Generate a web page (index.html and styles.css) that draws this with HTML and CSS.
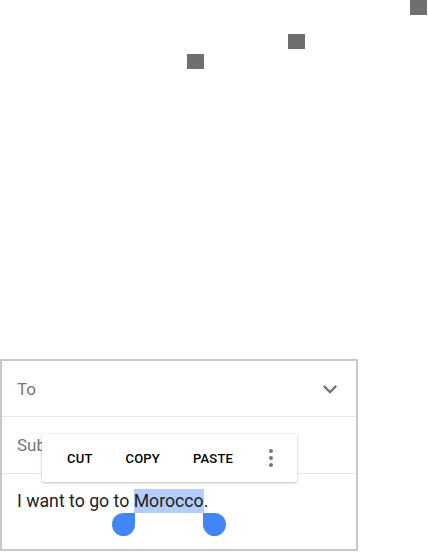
FILE: index.html
```html
<!DOCTYPE html>
<html>
<head>
<meta charset="utf-8">
<link rel="stylesheet" href="styles.css">
</head>
<body>
<div class="stage">
  <span class="sq sq1"></span>
  <span class="sq sq2"></span>
  <span class="sq sq3"></span>
  <div class="compose">
    <div class="row to-row">
      <span class="label">To</span>
      <svg class="chev" width="28" height="28" viewBox="0 0 24 24"><path d="M7.4 8.6 12 13.2l4.6-4.6L18 10l-6 6-6-6z" fill="#757575"/></svg>
    </div>
    <div class="row subj-row">
      <span class="label">Subject</span>
    </div>
    <div class="row body-row">
      <span class="body-text">I want to go to <span class="sel">Morocco<span class="handle hl"></span><span class="handle hr"></span></span>.</span>
    </div>
    <div class="menu">
      <span class="mitem">CUT</span>
      <span class="mitem">COPY</span>
      <span class="mitem">PASTE</span>
      <svg class="more" width="6" height="20" viewBox="0 0 6 20"><circle cx="3" cy="3" r="2" fill="#757575"/><circle cx="3" cy="10" r="2" fill="#757575"/><circle cx="3" cy="17" r="2" fill="#757575"/></svg>
    </div>
  </div>
</div>
</body>
</html>
```
FILE: styles.css
```css
html, body { margin: 0; padding: 0; background: #fff; }
body { font-family: Roboto, "Noto Sans", sans-serif; }
.stage { position: relative; width: 428px; height: 552px; padding-top: 359px; box-sizing: border-box; }
.sq { position: absolute; width: 17px; height: 15px; background: #6f6f6f; }
.sq1 { left: 410px; top: 0; }
.sq2 { left: 288px; top: 34px; }
.sq3 { left: 187px; top: 54px; }
.compose { position: relative; width: 358px; height: 192px; box-sizing: border-box; border: 2px solid #c8c8c8; display: flex; flex-direction: column; }
.row { display: flex; align-items: center; padding: 0 15px; box-sizing: border-box; }
.to-row { height: 56px; border-bottom: 1px solid #e6e6e6; justify-content: space-between; padding-right: 12px; }
.subj-row { height: 57px; border-bottom: 1px solid #e6e6e6; }
.body-row { flex: 1; align-items: flex-start; padding-top: 15px; }
.label { font-size: 17px; color: #757575; }
.body-text { font-size: 17.7px; color: #212121; line-height: 24px; }
.sel { position: relative; display: inline-block; height: 24px; background: #b3cefb; }
.handle { position: absolute; top: 24px; width: 23px; height: 23px; background: #4285f4; border-radius: 50%; }
.hl { left: -22px; border-top-right-radius: 0; }
.hr { right: -22px; border-top-left-radius: 0; }
.menu { position: absolute; left: 40px; top: 73px; width: 255px; height: 48px; background: #fff; border-radius: 2px; box-shadow: 0 1px 3px rgba(0,0,0,0.25), 0 0 1px rgba(0,0,0,0.12); display: flex; align-items: center; padding-left: 25px; box-sizing: border-box; }
.mitem { font-size: 13px; font-weight: 500; color: #000; margin-right: 33px; letter-spacing: 0.2px; }
.more { margin-left: auto; margin-right: 23px; }
```
